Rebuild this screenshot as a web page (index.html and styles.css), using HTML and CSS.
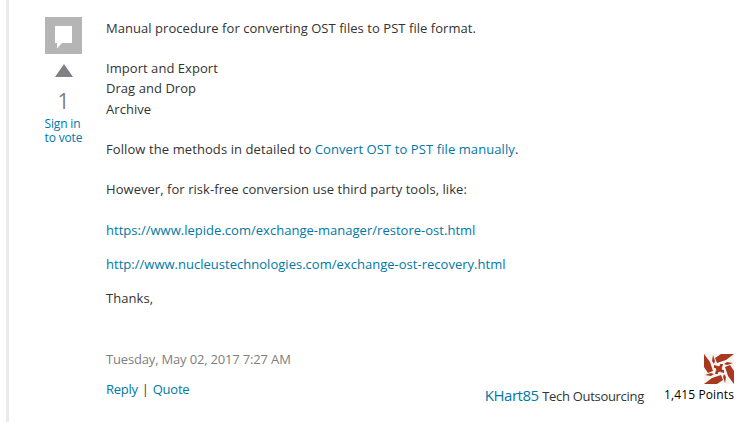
FILE: index.html
```
<!DOCTYPE html>
<html lang="en">

<head>
	<meta charset="utf-8">
	<title>Convert OST files to PST</title>
	<link rel="stylesheet" href="styles.css">
</head>

<body>
	<div class="message">
		<div class="votebox">
			<svg class="icon" width="37" height="37" viewBox="0 0 37 37">
				<rect width="37" height="37" fill="#b5b5b5" />
				<path d="M10 9h17v17H17l-5 5.500V26h-2z" fill="#fff" />
			</svg>
			<svg class="arrow" width="18" height="13" viewBox="0 0 18 13">
				<path d="M9 0l9 13H0z" fill="#808085" />
			</svg>
			<div class="votenumber">1</div>
			<a class="signin" href="#">Sign in<br>to vote</a>
		</div>
		<div class="content">
			<div class="body">
				<div>Manual procedure for converting OST files to PST file format.<br><br>
					Import and Export<br>
					Drag and Drop<br>
					Archive<br><br>
					<span class="methods">Follow the methods in detailed to <a href="#">Convert OST to PST file manually</a>.</span><br><br>
					However, for risk-free conversion use third party tools, like:<br><br></div>
				<p><a class="url" href="#">https://www.lepide.com/exchange-manager/restore-ost.html</a></p>
				<p><a class="url" href="#">http://www.nucleustechnologies.com/exchange-ost-recovery.html</a></p>
				<p>Thanks,</p>
			</div>
			<div class="date">Tuesday, May 02, 2017 7:27 AM</div>
			<div class="footer">
				<div class="actions"><a href="#">Reply</a><span class="bar">|</span><a href="#">Quote</a></div>
				<div class="user">
					<a class="username" href="#">KHart85</a>
					<span class="affiliation">Tech Outsourcing</span>
				</div>
				<div class="profile">
					<svg class="avatar" width="30" height="30" viewBox="0 0 30 30">
						<rect width="30" height="30" fill="#f7f5f4" />
						<g id="blade" fill="#a8391f">
							<path d="M0 0l6 8 3 9-5 2-4-6z" />
							<path d="M11 13l4-1v3h-3z" />
							<path d="M9 1l2 6-1 3-2-3z" />
							<path d="M10 11l4 1-2 2-2 0z" />
						</g>
						<use href="#blade" transform="rotate(90 15 15)" />
						<use href="#blade" transform="rotate(180 15 15)" />
						<use href="#blade" transform="rotate(270 15 15)" />
					</svg>
					<div class="points">1,415 Points</div>
				</div>
			</div>
		</div>
	</div>
</body>

</html>
```

FILE: styles.css
```
* {
	box-sizing: border-box;
}

body {
	margin: 0;
	padding-left: 6px;
	background: #fff;
	color: #333;
	font-family: "Open Sans", "Noto Sans", sans-serif;
	font-size: 13px;
	line-height: 20.15px;
}

a {
	color: #0078a5;
	text-decoration: none;
}

.message {
	display: flex;
	height: 422px;
	border-left: 3px solid #ebebeb;
}

.votebox {
	display: flex;
	flex-direction: column;
	align-items: center;
	width: 37px;
	margin: 17px 24px 0 36px;
}

.arrow {
	margin-top: 10px;
}

.votenumber {
	margin-top: 10px;
	color: #808085;
	font-size: 21px;
	line-height: 28px;
}

.signin {
	width: 38px;
	margin-top: 2px;
	font-size: 12px;
	letter-spacing: -0.15px;
	line-height: 14px;
	white-space: nowrap;
}

.content {
	flex: 1;
	padding: 18px 22px 0 0;
}

.body {
	letter-spacing: 0.05px;
}

.methods {
	letter-spacing: 0.09px;
}

.url {
	letter-spacing: 0.02px;
}

.body p {
	margin: 0 0 14px;
}

.date {
	margin-top: 41px;
	color: #808080;
	letter-spacing: -0.17px;
}

.footer {
	display: flex;
	align-items: flex-start;
	margin-top: -15px;
}

.actions {
	padding-top: 25px;
	letter-spacing: -0.25px;
}

.bar {
	margin: 0 4px;
}

.user {
	margin-left: auto;
	padding-top: 31px;
	white-space: nowrap;
}

.username {
	font-size: 15px;
	letter-spacing: -0.45px;
}

.affiliation {
	letter-spacing: -0.3px;
}

.profile {
	display: flex;
	flex-direction: column;
	align-items: flex-end;
	margin-left: 20px;
}

.avatar {
	margin-bottom: 1px;
}

.points {
	color: #000;
	font-size: 12px;
	letter-spacing: 0.13px;
	line-height: 20px;
	white-space: nowrap;
}
```
